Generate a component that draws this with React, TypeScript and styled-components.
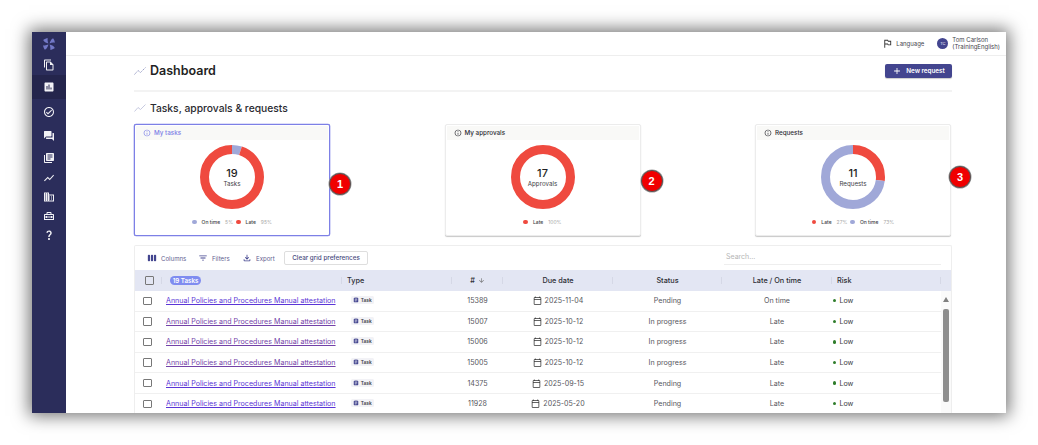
import React from 'react';
import styled, { createGlobalStyle } from 'styled-components';
import {
  MdOutlineFileCopy,
  MdAssessment,
  MdOutlineCheckCircle,
  MdForum,
  MdLibraryBooks,
  MdShowChart,
  MdDomain,
  MdOutlineHomeRepairService,
  MdQuestionMark,
  MdOutlinedFlag,
  MdAdd,
  MdInfoOutline,
  MdViewWeek,
  MdFilterList,
  MdOutlineFileDownload,
  MdArrowDownward,
  MdOutlineCalendarToday,
  MdAssignment,
} from 'react-icons/md';

const RED = '#ef4a3f';
const BLUE = '#a0a8d8';

const GlobalStyle = createGlobalStyle`
  html, body {
    margin: 0;
    padding: 0;
    background: #fff;
    overflow: hidden;
  }
  * {
    box-sizing: border-box;
  }
  body {
    font-family: Inter, "Liberation Sans", sans-serif;
    color: #26262c;
  }
`;

const Page = styled.div`
  padding: 32px;
  width: 1038px;
  height: 445px;
`;

const Window = styled.div`
  width: 974px;
  height: 381px;
  display: flex;
  overflow: hidden;
  background: #fff;
  box-shadow: 0 0 16px 3px rgba(0, 0, 0, 0.55);
`;

const Sidebar = styled.nav`
  width: 34px;
  flex-shrink: 0;
  background: #2b2d5b;
  display: flex;
  flex-direction: column;
`;

const NavItem = styled.div<{ $h: number; $active?: boolean }>`
  height: ${(p) => p.$h}px;
  display: flex;
  align-items: center;
  justify-content: center;
  color: #f2f2f6;
  font-size: 12px;
  background: ${(p) => (p.$active ? '#24254c' : 'transparent')};
`;

const Main = styled.div`
  flex: 1;
  min-width: 0;
  display: flex;
  flex-direction: column;
`;

const TopBar = styled.header`
  height: 24px;
  flex-shrink: 0;
  border-bottom: 1px solid #eeeeee;
  display: flex;
  align-items: center;
  justify-content: flex-end;
  padding-right: 6px;
`;

const Language = styled.div`
  display: flex;
  align-items: center;
  gap: 3px;
  font-size: 6px;
  color: #44444c;
  margin-right: 13px;
  svg {
    font-size: 11px;
    color: #333;
  }
`;

const Avatar = styled.div`
  width: 11px;
  height: 11px;
  border-radius: 50%;
  background: #43458f;
  color: #e8e8f5;
  font-size: 4px;
  display: flex;
  align-items: center;
  justify-content: center;
  margin-right: 4px;
`;

const UserName = styled.div`
  font-size: 6px;
  line-height: 6.6px;
  color: #44444c;
`;

const Content = styled.div`
  flex: 1;
  min-height: 0;
  padding: 0 54px 0 68px;
  display: flex;
  flex-direction: column;
`;

const TitleRow = styled.div`
  height: 36px;
  flex-shrink: 0;
  display: flex;
  align-items: center;
  justify-content: space-between;
  padding-bottom: 5px;
  border-bottom: 2px solid #f3f3f3;
`;

const Heading = styled.div`
  display: flex;
  align-items: center;
  gap: 4px;
`;

const PageTitle = styled.h1`
  margin: 0;
  font-size: 12.5px;
  font-weight: 600;
  color: #1f1f24;
`;

const SectionTitle = styled.h2`
  margin: 0;
  font-size: 10.3px;
  font-weight: 500;
  color: #2a2a30;
`;

const SectionRow = styled.div`
  height: 32px;
  flex-shrink: 0;
  display: flex;
  align-items: center;
`;

const NewRequest = styled.button`
  width: 67px;
  height: 14px;
  border: 0;
  border-radius: 2px;
  background: #43458f;
  color: #fff;
  font-family: inherit;
  font-size: 6.3px;
  font-weight: 600;
  display: flex;
  align-items: center;
  justify-content: center;
  gap: 4px;
  padding: 0;
  box-shadow: 0 1px 1px rgba(0, 0, 0, 0.2);
  svg {
    font-size: 10px;
  }
`;

const Cards = styled.div`
  display: flex;
  justify-content: space-between;
  flex-shrink: 0;
  padding-right: 1px;
`;

const Card = styled.section<{ $selected?: boolean }>`
  position: relative;
  width: 196px;
  height: 112px;
  border-radius: 2px;
  background: #fff;
  padding: 1px 1px 0;
  border: 1px solid ${(p) => (p.$selected ? '#7d80e6' : '#ececec')};
  box-shadow: ${(p) => (p.$selected ? '0 0 0 0.3px #7d80e6' : '0 1px 1px rgba(0, 0, 0, 0.22)')};
  display: flex;
  flex-direction: column;
  align-items: center;
`;

const CardHeader = styled.div<{ $selected?: boolean }>`
  align-self: stretch;
  height: 14px;
  background: #f9f9f7;
  display: flex;
  align-items: center;
  gap: 3px;
  padding-left: 7px;
  font-size: 6.3px;
  font-weight: 500;
  color: ${(p) => (p.$selected ? '#7d80e6' : '#2f2f35')};
  svg {
    font-size: 8px;
  }
`;

const Donut = styled.div`
  position: relative;
  width: 64px;
  height: 64px;
  margin-top: 5px;
`;

const DonutCenter = styled.div`
  position: absolute;
  inset: 0;
  display: flex;
  flex-direction: column;
  align-items: center;
  justify-content: center;
`;

const DonutValue = styled.div`
  font-size: 11px;
  line-height: 12px;
  font-weight: 500;
  color: #1f1f24;
`;

const DonutLabel = styled.div`
  font-size: 6.2px;
  line-height: 9px;
  color: #3c3c44;
`;

const Legend = styled.div`
  display: flex;
  align-items: center;
  justify-content: center;
  gap: 3px;
  margin-top: 10px;
  font-size: 5px;
`;

const Dot = styled.span<{ $color: string }>`
  width: 4.5px;
  height: 4.5px;
  border-radius: 50%;
  background: ${(p) => p.$color};
  margin-right: 2px;
`;

const LegendLabel = styled.span`
  font-weight: 500;
  color: #3c3c44;
  margin-right: 2px;
`;

const LegendPct = styled.span`
  color: #a9a9a9;
`;

const Badge = styled.div<{ $left: number; $top: number }>`
  position: absolute;
  left: calc(100% + ${(p) => p.$left}px);
  top: ${(p) => p.$top}px;
  width: 22px;
  height: 22px;
  border-radius: 50%;
  background: #f00000;
  border: 1px solid #555;
  box-shadow: 0 0 0 0.5px #999;
  color: #fff;
  font-family: "Liberation Sans", sans-serif;
  font-size: 11px;
  font-weight: 700;
  display: flex;
  align-items: center;
  justify-content: center;
`;

const Grid = styled.section`
  margin-top: 9px;
  flex: 1;
  min-height: 0;
  margin-right: 0;
  border: 1px solid #eeeeee;
  border-bottom: 0;
  border-radius: 2px 2px 0 0;
  display: flex;
  flex-direction: column;
  overflow: hidden;
`;

const Toolbar = styled.div`
  height: 24px;
  flex-shrink: 0;
  display: flex;
  align-items: center;
  padding-left: 12px;
`;

const ToolButton = styled.div<{ $w: number }>`
  width: ${(p) => p.$w}px;
  display: flex;
  align-items: center;
  gap: 4px;
  font-size: 6.1px;
  color: #5f6190;
  svg {
    font-size: 10px;
    color: #43458f;
  }
`;

const ClearButton = styled.button`
  width: 84px;
  height: 14px;
  background: #fff;
  border: 1px solid #dedede;
  border-radius: 2px;
  font-family: inherit;
  font-size: 6.3px;
  font-weight: 500;
  color: #4a4c80;
  padding: 0;
`;

const Search = styled.div`
  margin-left: auto;
  margin-right: 10px;
  width: 217px;
  height: 14px;
  padding-left: 2px;
  border-bottom: 1px solid #eeeeee;
  font-size: 7px;
  line-height: 11px;
  color: #b5b5b5;
`;

const HeaderRow = styled.div`
  height: 21px;
  flex-shrink: 0;
  background: #e3e6f3;
  display: grid;
  grid-template-columns: 27px 180px 110px 51px 110px 109px 110px 109px 1fr;
  align-items: center;
  font-size: 7.3px;
  font-weight: 500;
  color: #2e2e36;
`;

const HeadCell = styled.div<{ $center?: boolean }>`
  height: 21px;
  display: flex;
  align-items: center;
  justify-content: ${(p) => (p.$center ? 'center' : 'flex-start')};
  gap: 3px;
  padding-left: ${(p) => (p.$center ? 0 : 5)}px;
  position: relative;
  &::after {
    content: '';
    position: absolute;
    right: 0;
    top: 7px;
    height: 7px;
    width: 1px;
    background: #d5d8e6;
  }
  svg {
    font-size: 7px;
    color: #666;
  }
`;

const CountChip = styled.span`
  width: 31px;
  height: 9px;
  margin-left: 3px;
  border-radius: 5px;
  background: #7f8cf0;
  color: #fff;
  font-size: 6.2px;
  font-weight: 600;
  display: flex;
  align-items: center;
  justify-content: center;
`;

const Checkbox = styled.span`
  width: 8.5px;
  height: 8.5px;
  border: 1px solid #777;
  border-radius: 1px;
  background: #fff;
  display: block;
`;

const HeadCheck = styled(Checkbox)`
  margin-left: 5px;
  background: transparent;
`;

const Body = styled.div`
  flex: 1;
  min-height: 0;
  display: flex;
`;

const Rows = styled.div`
  width: 806px;
  flex-shrink: 0;
`;

const Row = styled.div`
  height: 20.6px;
  display: grid;
  grid-template-columns: 27px 180px 110px 51px 110px 109px 110px 109px;
  align-items: center;
  border-bottom: 1px solid #f0f0f0;
  font-size: 7.1px;
  color: #55555c;
`;

const RowCheck = styled(Checkbox)`
  margin-left: 8px;
  margin-top: 0;
`;

const TaskLink = styled.a<{ $visited?: boolean }>`
  display: block;
  width: 170px;
  margin-left: 4px;
  overflow: hidden;
  white-space: nowrap;
  text-overflow: ellipsis;
  text-decoration: underline;
  color: ${(p) => (p.$visited ? '#7342a8' : '#5a35d6')};
`;

const TypeCell = styled.div`
  padding-left: 9px;
`;

const TypeTag = styled.span`
  width: 23px;
  height: 8px;
  border-radius: 1.5px;
  background: #f2f2f6;
  display: inline-flex;
  align-items: center;
  justify-content: center;
  gap: 1.5px;
  font-size: 4.8px;
  font-weight: 600;
  color: #3c3c44;
  svg {
    font-size: 6px;
    color: #43458f;
  }
`;

const Centered = styled.div`
  text-align: center;
`;

const DateCell = styled.div`
  display: flex;
  align-items: center;
  justify-content: center;
  gap: 3px;
  svg {
    font-size: 9px;
    color: #333;
  }
`;

const RiskCell = styled.div`
  display: flex;
  align-items: center;
  gap: 3px;
  padding-left: 1px;
  color: #3c3c44;
`;

const RiskDot = styled.span`
  width: 3.4px;
  height: 3.4px;
  border-radius: 50%;
  background: #2f7d2b;
`;

const Scrollbar = styled.div`
  flex: 1;
  background: #fafafa;
  display: flex;
  flex-direction: column;
  align-items: center;
  padding-top: 6px;
`;

const ScrollArrow = styled.span`
  width: 0;
  height: 0;
  border-left: 3.5px solid transparent;
  border-right: 3.5px solid transparent;
  border-bottom: 5px solid #808080;
`;

const ScrollThumb = styled.span`
  width: 6px;
  height: 93px;
  margin-top: 7px;
  border-radius: 2px;
  background: #8e8e8e;
`;

const Logo = () => (
  <svg width="14" height="14" viewBox="0 0 24 24" fill="#7278c6">
    {[0, 90, 180, 270].map((deg) => (
      <path key={deg} d="M11 11C8 10 4 9 2 5c3-2 5-3 8-3-1 3 0 6 1 9z" transform={`rotate(${deg} 12 12)`} />
    ))}
  </svg>
);

const Sparkline = ({ dashed }: { dashed?: boolean }) => (
  <svg width="12" height="10" viewBox="0 0 12 10" fill="none" stroke={dashed ? '#8288b8' : '#b9bcd8'} strokeWidth="0.8" strokeDasharray={dashed ? '1.6 0.8' : undefined}>
    <path d="M0.5 8.5 4 4.5l2.5 2L11.5 1.5" />
  </svg>
);

type Slice = { label: string; pct: number; color: string };

const Ring = ({ slices }: { slices: Slice[] }) => {
  const r = 27.5;
  const len = 2 * Math.PI * r;
  let offset = 0;
  return (
    <svg width="64" height="64" viewBox="0 0 64 64" fill="none">
      <g transform="rotate(-90 32 32)">
        {slices.map((s) => {
          const dash = (s.pct / 100) * len;
          const arc = (
            <circle
              key={s.label}
              cx="32"
              cy="32"
              r={r}
              stroke={s.color}
              strokeWidth="9"
              strokeDasharray={`${dash} ${len - dash}`}
              strokeDashoffset={-offset}
            />
          );
          offset += dash;
          return arc;
        })}
      </g>
    </svg>
  );
};

const late = (pct: number) => ({ label: 'Late', pct, color: RED });
const onTime = (pct: number) => ({ label: 'On time', pct, color: BLUE });

const cards = [
  { title: 'My tasks', value: 19, unit: 'Tasks', selected: true, slices: [onTime(5), late(95)], badge: 1, left: 0, top: 48 },
  { title: 'My approvals', value: 17, unit: 'Approvals', selected: false, slices: [late(100)], badge: 2, left: 1, top: 45 },
  { title: 'Requests', value: 11, unit: 'Requests', selected: false, slices: [late(27), onTime(73)], badge: 3, left: -1, top: 41 },
];

const rows = [
  { id: 15389, due: '2025-11-04', status: 'Pending', timing: 'On time', visited: false },
  { id: 15007, due: '2025-10-12', status: 'In progress', timing: 'Late', visited: true },
  { id: 15006, due: '2025-10-12', status: 'In progress', timing: 'Late', visited: true },
  { id: 15005, due: '2025-10-12', status: 'In progress', timing: 'Late', visited: true },
  { id: 14375, due: '2025-09-15', status: 'Pending', timing: 'Late', visited: false },
  { id: 11928, due: '2025-05-20', status: 'Pending', timing: 'Late', visited: false },
];

const App = () => {
  return (
    <Page>
      <GlobalStyle />
      <Window>
        <Sidebar>
          <NavItem $h={23}><Logo /></NavItem>
          <NavItem $h={20}><MdOutlineFileCopy /></NavItem>
          <NavItem $h={24} $active><MdAssessment /></NavItem>
          <NavItem $h={25}><MdOutlineCheckCircle /></NavItem>
          <NavItem $h={23}><MdForum /></NavItem>
          <NavItem $h={21}><MdLibraryBooks /></NavItem>
          <NavItem $h={19}><MdShowChart /></NavItem>
          <NavItem $h={19}><MdDomain /></NavItem>
          <NavItem $h={19}><MdOutlineHomeRepairService /></NavItem>
          <NavItem $h={20}><MdQuestionMark /></NavItem>
        </Sidebar>
        <Main>
          <TopBar>
            <Language><MdOutlinedFlag />Language</Language>
            <Avatar>TC</Avatar>
            <UserName>Tom Carlson<br />(TrainingEnglish)</UserName>
          </TopBar>
          <Content>
            <TitleRow>
              <Heading><Sparkline dashed /><PageTitle>Dashboard</PageTitle></Heading>
              <NewRequest><MdAdd />New request</NewRequest>
            </TitleRow>
            <SectionRow>
              <Heading><Sparkline /><SectionTitle>Tasks, approvals &amp; requests</SectionTitle></Heading>
            </SectionRow>
            <Cards>
              {cards.map((c) => (
                <Card key={c.title} $selected={c.selected}>
                  <CardHeader $selected={c.selected}><MdInfoOutline />{c.title}</CardHeader>
                  <Donut>
                    <Ring slices={c.slices} />
                    <DonutCenter>
                      <DonutValue>{c.value}</DonutValue>
                      <DonutLabel>{c.unit}</DonutLabel>
                    </DonutCenter>
                  </Donut>
                  <Legend>
                    {c.slices.map((s) => (
                      <React.Fragment key={s.label}>
                        <Dot $color={s.color} />
                        <LegendLabel>{s.label}</LegendLabel>
                        <LegendPct>{s.pct}%</LegendPct>
                      </React.Fragment>
                    ))}
                  </Legend>
                  <Badge $left={c.left} $top={c.top}>{c.badge}</Badge>
                </Card>
              ))}
            </Cards>
            <Grid>
              <Toolbar>
                <ToolButton $w={51}><MdViewWeek />Columns</ToolButton>
                <ToolButton $w={44}><MdFilterList />Filters</ToolButton>
                <ToolButton $w={42}><MdOutlineFileDownload />Export</ToolButton>
                <ClearButton>Clear grid preferences</ClearButton>
                <Search>Search...</Search>
              </Toolbar>
              <HeaderRow>
                <HeadCell><HeadCheck /></HeadCell>
                <HeadCell><CountChip>19 Tasks</CountChip></HeadCell>
                <HeadCell>Type</HeadCell>
                <HeadCell $center>#<MdArrowDownward /></HeadCell>
                <HeadCell $center>Due date</HeadCell>
                <HeadCell $center>Status</HeadCell>
                <HeadCell $center>Late / On time</HeadCell>
                <HeadCell>Risk</HeadCell>
                <div />
              </HeaderRow>
              <Body>
                <Rows>
                  {rows.map((r) => (
                    <Row key={r.id}>
                      <RowCheck />
                      <TaskLink $visited={r.visited}>Annual Policies and Procedures Manual attestation</TaskLink>
                      <TypeCell><TypeTag><MdAssignment />Task</TypeTag></TypeCell>
                      <Centered>{r.id}</Centered>
                      <DateCell><MdOutlineCalendarToday />{r.due}</DateCell>
                      <Centered>{r.status}</Centered>
                      <Centered>{r.timing}</Centered>
                      <RiskCell><RiskDot />Low</RiskCell>
                    </Row>
                  ))}
                </Rows>
                <Scrollbar>
                  <ScrollArrow />
                  <ScrollThumb />
                </Scrollbar>
              </Body>
            </Grid>
          </Content>
        </Main>
      </Window>
    </Page>
  );
};

export default App;
